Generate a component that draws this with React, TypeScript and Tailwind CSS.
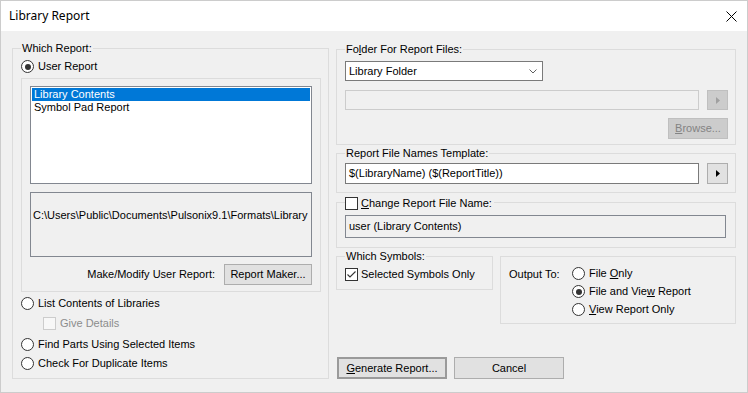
import React from "react";

const font = { fontFamily: '"Liberation Sans", Arial, sans-serif' };

function Radio({ checked = false }: { checked?: boolean }) {
  return (
    <span className="flex h-[13px] w-[13px] shrink-0 items-center justify-center rounded-full border border-[#333333] bg-white">
      {checked && <span className="h-[6px] w-[6px] rounded-full bg-[#333333]" />}
    </span>
  );
}

function Check({ checked = false, disabled = false }: { checked?: boolean; disabled?: boolean }) {
  return (
    <span
      className={
        disabled
          ? "flex h-[13px] w-[13px] shrink-0 border border-[#cccccc] bg-[#f7f7f7]"
          : "flex h-[13px] w-[13px] shrink-0 items-center justify-center border border-[#333333] bg-white"
      }
    >
      {checked && (
        <svg width="11" height="11" viewBox="0 0 11 11">
          <path d="M1.5 5.5 L4 8 L9.5 2.5" fill="none" stroke="#333333" strokeWidth="1.1" />
        </svg>
      )}
    </span>
  );
}

function Arrow({ disabled = false }: { disabled?: boolean }) {
  return (
    <span
      className={
        disabled
          ? "flex h-[20px] w-[21px] items-center justify-center border border-[#bfbfbf] bg-[#cccccc]"
          : "flex h-[21px] w-[21px] items-center justify-center border border-[#adadad] bg-[#e1e1e1]"
      }
    >
      <svg width="4" height="7" viewBox="0 0 4 7">
        <path d="M0 0 L4 3.5 L0 7 Z" fill={disabled ? "#a0a0a0" : "#000000"} />
      </svg>
    </span>
  );
}

function Legend({ children }: { children: React.ReactNode }) {
  return (
    <span className="absolute left-[8px] top-[-7px] bg-[#f0f0f0] px-[1px] leading-[13px]">{children}</span>
  );
}

export default function App() {
  return (
    <div
      className="flex h-[393px] w-[748px] flex-col border border-[#cccccc] bg-[#f0f0f0] text-[11px] text-black"
      style={font}
    >
      <div className="flex h-[30px] items-center justify-between bg-white pl-[8px] pr-[10px]">
        <span className="text-[12px]" style={{ fontFamily: '"Noto Sans", "Open Sans", sans-serif' }}>
          Library Report
        </span>
        <svg width="11" height="11" viewBox="0 0 11 11">
          <path d="M0.5 0.5 L10.5 10.5 M10.5 0.5 L0.5 10.5" stroke="#000000" strokeWidth="1" />
        </svg>
      </div>

      <div className="flex px-[11px] pt-[17px]">
        {/* Which Report */}
        <div className="relative h-[331px] w-[318px] border border-[#dcdcdc]">
          <Legend>Which Report:</Legend>
          <div className="flex flex-col pl-[8px]">
            <label className="mt-[11px] flex h-[13px] items-center gap-[4px]">
              <Radio checked /> <span>User Report</span>
            </label>
            <div className="mt-[5px] flex h-[214px] w-[300px] flex-col border border-[#dcdcdc] pl-[8px] pt-[7px]">
              <div className="h-[98px] w-[282px] border border-[#828790] bg-white p-[1px]">
                <div className="h-[13px] bg-[#0078d7] pl-[2px] leading-[13px] text-white">Library Contents</div>
                <div className="h-[13px] pl-[2px] leading-[13px]">Symbol Pad Report</div>
              </div>
              <div className="mt-[8px] h-[65px] w-[282px] border border-[#828790] pl-[2px] pt-[16px] leading-[13px]">
                C:\Users\Public\Documents\Pulsonix9.1\Formats\Library
              </div>
              <div className="mt-[7px] flex w-[282px] items-center justify-end gap-[9px]">
                <span>Make/Modify User Report:</span>
                <button className="h-[21px] w-[88px] border border-[#adadad] bg-[#e1e1e1]">Report Maker...</button>
              </div>
            </div>
            <label className="mt-[5px] flex h-[13px] items-center gap-[4px]">
              <Radio /> <span>List Contents of Libraries</span>
            </label>
            <label className="ml-[22px] mt-[7px] flex h-[13px] items-center gap-[4px] text-[#8c8c8c]">
              <Check disabled /> <span>Give Details</span>
            </label>
            <label className="mt-[8px] flex h-[13px] items-center gap-[4px]">
              <Radio /> <span>Find Parts Using Selected Items</span>
            </label>
            <label className="mt-[6px] flex h-[13px] items-center gap-[4px]">
              <Radio /> <span>Check For Duplicate Items</span>
            </label>
          </div>
        </div>

        {/* right column */}
        <div className="ml-[7px] mt-[1px] flex w-[400px] flex-col">
          <div className="relative flex h-[96px] flex-col border border-[#dcdcdc] pl-[8px] pt-[11px]">
            <Legend>
              Fo<u>l</u>der For Report Files:
            </Legend>
            <div className="flex h-[20px] w-[198px] items-center justify-between border border-[#7a7a7a] bg-white pl-[3px] pr-[5px]">
              <span>Library Folder</span>
              <svg width="8" height="5" viewBox="0 0 8 5">
                <path d="M0.5 0.5 L4 4 L7.5 0.5" fill="none" stroke="#606060" strokeWidth="1" />
              </svg>
            </div>
            <div className="mt-[9px] flex items-center gap-[8px]">
              <div className="h-[20px] w-[354px] border border-[#cccccc] bg-[#f0f0f0]" />
              <Arrow disabled />
            </div>
            <div className="mt-[8px] flex w-[383px] justify-end">
              <button className="h-[21px] w-[60px] border border-[#bfbfbf] bg-[#cccccc] text-[#838383]">
                <u>B</u>rowse...
              </button>
            </div>
          </div>

          <div className="relative mt-[8px] flex h-[40px] items-start gap-[8px] border border-[#dcdcdc] pl-[8px] pt-[9px]">
            <Legend>Report File Names Template:</Legend>
            <div className="flex h-[21px] w-[354px] items-center border border-[#7a7a7a] bg-white pl-[3px]">
              $(LibraryName) ($(ReportTitle))
            </div>
            <Arrow />
          </div>

          <div className="relative mt-[9px] flex h-[46px] flex-col border border-[#dcdcdc] pl-[8px] pt-[12px]">
            <span className="absolute left-[8px] top-[-6px] flex items-center gap-[3px] bg-[#f0f0f0] pr-[2px] leading-[13px]">
              <Check />
              <span>
                <u>C</u>hange Report File Name:
              </span>
            </span>
            <div className="flex h-[23px] w-[381px] items-center border border-[#828790] bg-[#f0f0f0] pl-[3px]">
              user (Library Contents)
            </div>
          </div>

          <div className="mt-[8px] flex items-start gap-[7px]">
            <div className="relative h-[34px] w-[157px] border border-[#dcdcdc] pl-[8px] pt-[11px]">
              <Legend>Which Symbols:</Legend>
              <label className="flex h-[13px] items-center gap-[3px]">
                <Check checked /> <span>Selected Symbols Only</span>
              </label>
            </div>
            <div className="flex h-[68px] w-[236px] border border-[#dcdcdc] pl-[8px] pt-[10px]">
              <span className="mt-[1px] w-[63px] leading-[13px]">Output To:</span>
              <div className="flex flex-col gap-[5px]">
                <label className="flex h-[13px] items-center gap-[4px]">
                  <Radio />
                  <span>
                    File <u>O</u>nly
                  </span>
                </label>
                <label className="flex h-[13px] items-center gap-[4px]">
                  <Radio checked />
                  <span>
                    File and Vie<u>w</u> Report
                  </span>
                </label>
                <label className="flex h-[13px] items-center gap-[4px]">
                  <Radio />
                  <span>
                    <u>V</u>iew Report Only
                  </span>
                </label>
              </div>
            </div>
          </div>

          <div className="ml-[1px] mt-[33px] flex gap-[7px]">
            <button className="h-[22px] w-[110px] border-2 border-[#9a9a9a] bg-[#e1e1e1]">
              <u>G</u>enerate Report...
            </button>
            <button className="h-[22px] w-[110px] border border-[#adadad] bg-[#e1e1e1]">Cancel</button>
          </div>
        </div>
      </div>
    </div>
  );
}
